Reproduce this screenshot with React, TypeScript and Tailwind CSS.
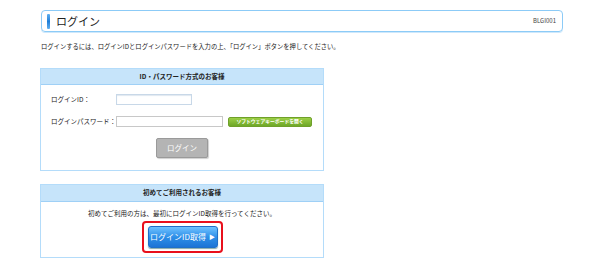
export default function App() {
  const font = { fontFamily: '"Noto Sans CJK JP", "Noto Sans", sans-serif' };
  return (
    <main className="h-[279px] w-[600px] overflow-hidden bg-white text-[#333]" style={font}>
      <div className="ml-[41px] mt-[10px] flex h-[22px] w-[522px] items-center rounded-[4px] border border-[#8ccbf7] shadow-[0_1px_0_#cfe8fb]">
        <div className="ml-[5px] h-[15px] w-[3px] rounded-[1px] bg-gradient-to-b from-[#5fb0f0] via-[#1e7fd8] to-[#5fb0f0]" />
        <h1 className="ml-[6px] text-[11px] leading-none font-normal text-[#222]">ログイン</h1>
        <span className="ml-auto mr-[6px] text-[6px] leading-none text-[#444]">BLGI001</span>
      </div>

      <p className="ml-[41px] mt-[11px] text-[6.3px] leading-[8px] text-[#222]">
        ログインするには、ログインIDとログインパスワードを入力の上、「ログイン」ボタンを押してください。
      </p>

      <section className="ml-[40px] mt-[17px] h-[103px] w-[284px] border border-[#b4dcfa]">
        <h2 className="flex h-[16px] items-center justify-center border-b border-[#9fd0f6] bg-[#c6e4fa] text-[6.5px] font-bold text-[#222]">
          ID・パスワード方式のお客様
        </h2>
        <div className="ml-[10px] mt-[9px] flex items-center">
          <span className="w-[65px] text-[6.5px] text-[#222]">ログインID：</span>
          <div className="h-[11px] w-[76px] border border-[#c8d8e8] bg-white shadow-[inset_0_1px_1px_#e0e8f0]" />
        </div>
        <div className="ml-[10px] mt-[11px] flex items-center">
          <span className="w-[65px] text-[6.5px] text-[#222]">ログインパスワード：</span>
          <div className="h-[11px] w-[107px] border border-[#c8c8c8] bg-white" />
          <button className="ml-[5px] flex h-[10px] w-[84px] items-center justify-center rounded-[2px] border border-[#6fa02a] bg-gradient-to-b from-[#9ccf45] to-[#6ea728] text-[4.8px] font-bold leading-none text-white">
            ソフトウェアキーボードを開く
          </button>
        </div>
        <div className="mt-[11px] flex justify-center">
          <button className="flex h-[20px] w-[52px] items-center justify-center rounded-[2px] border border-[#9a9a9a] bg-[#b4b4b4] text-[7.5px] leading-none text-white shadow-[1px_1px_1px_#d0d0d0]">
            ログイン
          </button>
        </div>
      </section>

      <section className="ml-[40px] mt-[13px] h-[74px] w-[284px] border border-[#b4dcfa]">
        <h2 className="flex h-[17px] items-center justify-center border-b border-[#9fd0f6] bg-[#c6e4fa] text-[6.5px] font-bold text-[#222]">
          初めてご利用されるお客様
        </h2>
        <p className="mt-[7px] text-center text-[6.5px] leading-[8px] text-[#222]">
          初めてご利用の方は、最初にログインID取得を行ってください。
        </p>
        <div className="mt-[4px] flex justify-center">
          <div className="rounded-[4px] border-[2px] border-[#e8101c] p-[3px] pl-[4px] pr-[3px]">
            <button className="flex h-[22px] w-[70px] items-center justify-center gap-[3px] rounded-[3px] border border-[#1f6fc8] bg-gradient-to-b from-[#6ec2ff] via-[#2d8fe8] to-[#1c74d6] text-[8px] leading-none text-white shadow-[0_1px_1px_#8aa]">
              ログインID取得
              <span className="text-[6px]">▶</span>
            </button>
          </div>
        </div>
      </section>
    </main>
  );
}
